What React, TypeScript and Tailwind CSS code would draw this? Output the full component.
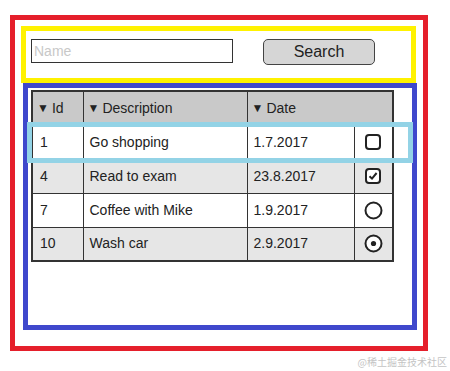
import React from "react";

const rows = [
  { id: "1", desc: "Go shopping", date: "1.7.2017", kind: "box", shaded: false },
  { id: "4", desc: "Read to exam", date: "23.8.2017", kind: "check", shaded: true },
  { id: "7", desc: "Coffee with Mike", date: "1.9.2017", kind: "radio", shaded: false },
  { id: "10", desc: "Wash car", date: "2.9.2017", kind: "radioOn", shaded: true },
];

const Mark = ({ kind }: { kind: string }) => {
  if (kind === "box" || kind === "check") {
    return (
      <svg width="16" height="16" viewBox="0 0 16 16">
        <rect x="1" y="1" width="14" height="14" rx="3" fill="#fff" stroke="#222" strokeWidth="2" />
        {kind === "check" && (
          <path d="M4.5 8.2 L7 10.6 L11.6 5" fill="none" stroke="#222" strokeWidth="2" />
        )}
      </svg>
    );
  }
  return (
    <svg width="19" height="19" viewBox="0 0 19 19">
      <circle cx="9.5" cy="9.5" r="8" fill="#fff" stroke="#222" strokeWidth="2" />
      {kind === "radioOn" && <circle cx="9.5" cy="9.5" r="2.6" fill="#222" />}
    </svg>
  );
};

const Caret = () => <span className="text-[12px] mr-[3px] relative top-[-1px]">▼</span>;

export default function App() {
  return (
    <div className="w-[450px] h-[371px] bg-white pt-[15px] pl-[10px] font-['Liberation_Sans',Arial,sans-serif] text-[#222]">
      <div className="w-[418px] h-[336px] border-[5px] border-[#e51f2b] pt-[6px] pl-[6px]">
        <div className="w-[395px] h-[57px] border-[5px] border-[#fff200] flex items-start pt-[8px] pl-[5px]">
          <input
            placeholder="Name"
            className="w-[202px] h-[24px] border border-[#333] px-[2px] text-[14px] outline-none placeholder:text-[#c8c8c8]"
          />
          <button className="ml-[30px] w-[112px] h-[26px] rounded-[5px] border border-[#444] bg-[#d6d6d6] text-[16px] leading-none">
            Search
          </button>
        </div>
        <div className="relative ml-[2px] w-[394px] h-[247px] border-[5px] border-[#3f48cc] pt-[2px] pl-[3px]">
          <table className="w-[361px] border-collapse border-2 border-[#333] text-[14px] table-fixed">
            <colgroup>
              <col className="w-[51px]" />
              <col className="w-[164px]" />
              <col className="w-[107px]" />
              <col className="w-[39px]" />
            </colgroup>
            <thead>
              <tr className="h-[34px] bg-[#c9c9c9]">
                <th className="border border-[#333] text-left font-normal pl-[4px]"><Caret />Id</th>
                <th className="border border-[#333] text-left font-normal pl-[4px]"><Caret />Description</th>
                <th colSpan={2} className="border border-[#333] text-left font-normal pl-[4px]"><Caret />Date</th>
              </tr>
            </thead>
            <tbody>
              {rows.map((r) => (
                <tr key={r.id} className={`h-[34px] ${r.shaded ? "bg-[#e6e6e6]" : "bg-white"}`}>
                  <td className="border border-[#333] pl-[7px]">{r.id}</td>
                  <td className="border border-[#333] pl-[6px]">{r.desc}</td>
                  <td className="border border-[#333] pl-[6px]">{r.date}</td>
                  <td className="border border-[#333]">
                    <div className="flex justify-center items-center">
                      <Mark kind={r.kind} />
                    </div>
                  </td>
                </tr>
              ))}
            </tbody>
          </table>
          <div className="absolute left-[-1px] top-[34px] w-[386px] h-[41px] border-[5px] border-[#93d3e6]" />
        </div>
      </div>
      <div className="mt-[4px] pr-[3px] text-right text-[10px] leading-[13px] text-[#c4c4c4] font-['Noto_Sans_CJK_SC',sans-serif]">
        @稀土掘金技术社区
      </div>
    </div>
  );
}
